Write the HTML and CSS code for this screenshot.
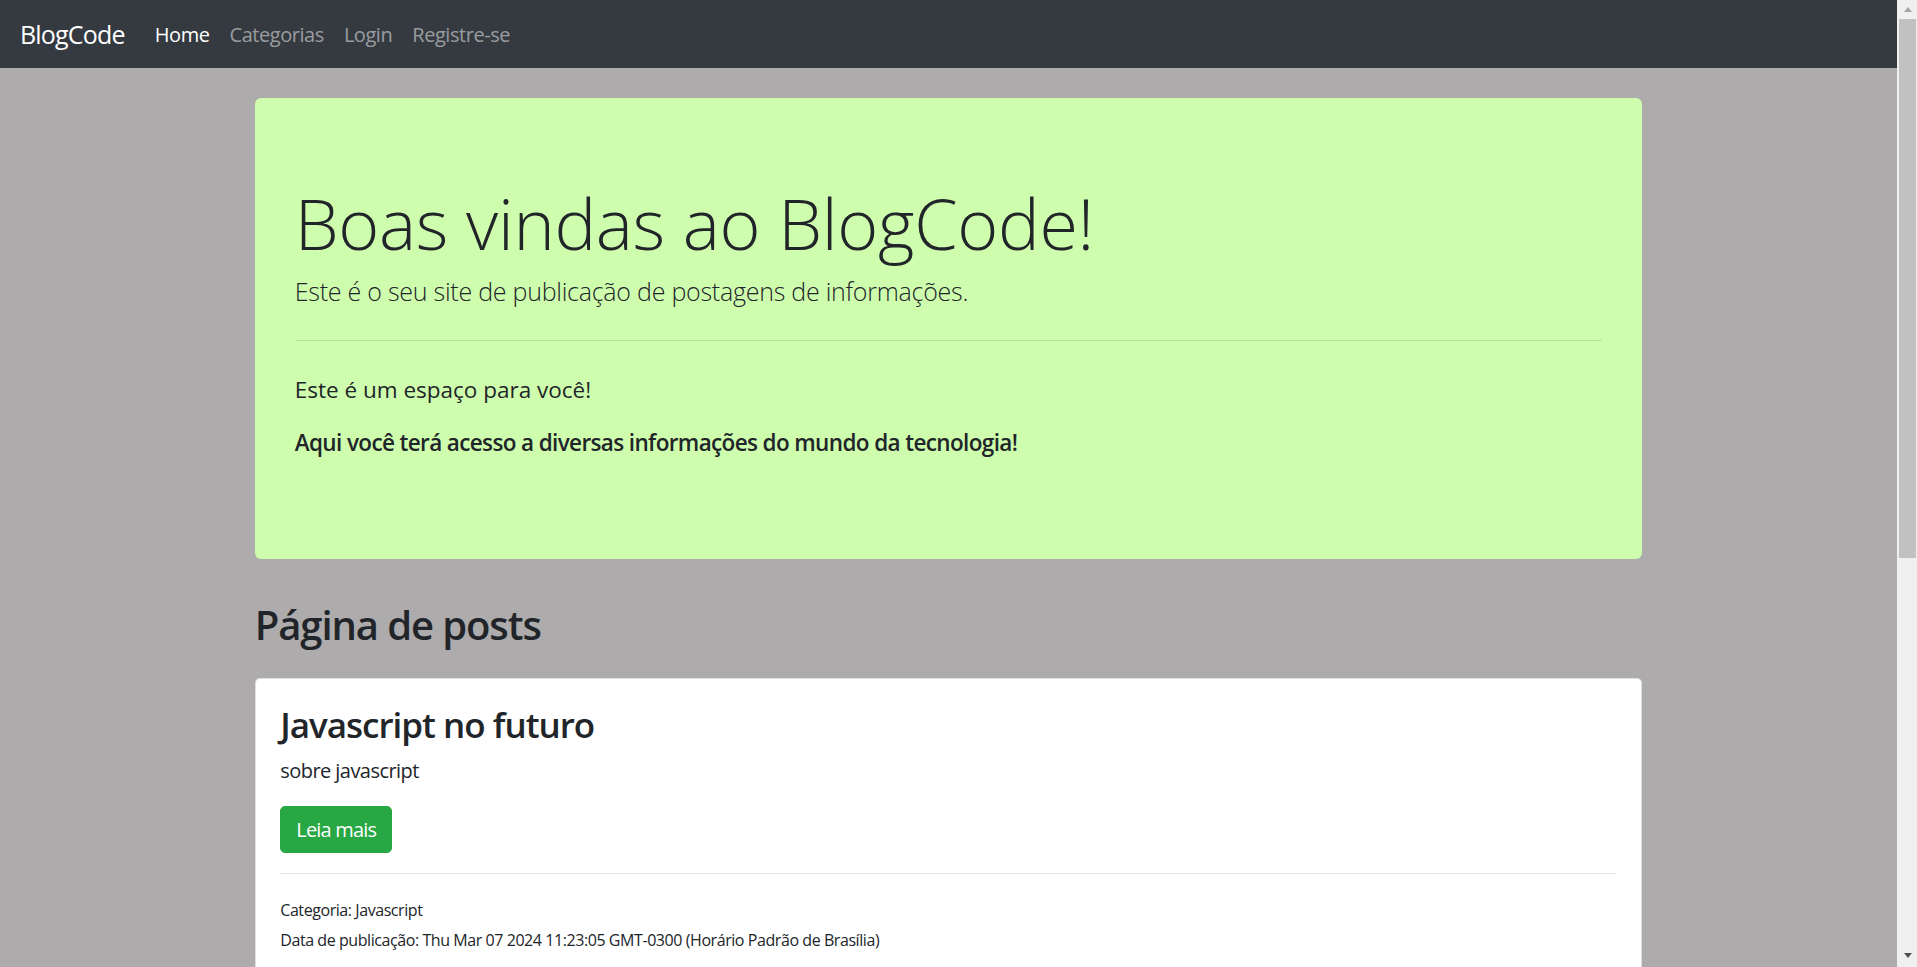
FILE: index.html
```html
<!DOCTYPE html>
<html lang="pt-br">
<head>
<meta charset="utf-8">
<title>BlogCode</title>
<link rel="stylesheet" href="styles.css">
</head>
<body>
<div class="app">
  <div class="page">
    <nav class="navbar">
      <a class="brand" href="#">BlogCode</a>
      <ul class="nav">
        <li><a class="nav-link active" href="#">Home</a></li>
        <li><a class="nav-link" href="#">Categorias</a></li>
        <li><a class="nav-link" href="#">Login</a></li>
        <li><a class="nav-link" href="#">Registre-se</a></li>
      </ul>
    </nav>
    <main class="container">
      <section class="jumbotron">
        <h1 class="display">Boas vindas ao BlogCode!</h1>
        <p class="lead">Este é o seu site de publicação de postagens de informações.</p>
        <hr class="jumbo-rule">
        <p class="jumbo-text">Este é um espaço para você!</p>
        <p class="jumbo-text strong">Aqui você terá acesso a diversas informações do mundo da tecnologia!</p>
      </section>
      <h2 class="section-title">Página de posts</h2>
      <article class="card">
        <div class="card-body">
          <h3 class="card-title">Javascript no futuro</h3>
          <p class="card-text">sobre javascript</p>
          <div class="actions"><a class="btn btn-success" href="#">Leia mais</a></div>
          <hr class="card-rule">
          <p class="meta"><small>Categoria: Javascript</small><br><small>Data de publicação: Thu Mar 07 2024 11:23:05 GMT-0300 (Horário Padrão de Brasília)</small></p>
        </div>
      </article>
    </main>
  </div>
  <div class="scrollbar" aria-hidden="true">
    <div class="sb-btn"><span class="arrow-up"></span></div>
    <div class="sb-thumb"></div>
    <div class="sb-space"></div>
    <div class="sb-btn sb-btn-down"><span class="arrow-down"></span></div>
  </div>
</div>
</body>
</html>
```

FILE: styles.css
```css
* { box-sizing: border-box; }

html, body {
  margin: 0;
  height: 100%;
}

body {
  font-family: "Open Sans", "Noto Sans", "Liberation Sans", sans-serif;
  font-size: 20px;
  line-height: 1.5;
  color: #212529;
  background: #adabac;
  overflow: hidden;
}

.app {
  display: flex;
  height: 100vh;
}

.page {
  flex: 1;
  min-width: 0;
  overflow: hidden;
}

/* Navbar */
.navbar {
  height: 68px;
  background: #343a40;
  display: flex;
  align-items: center;
  padding: 2px 20px 0;
}

.brand {
  font-size: 25px;
  color: #fff;
  text-decoration: none;
  margin-right: 20px;
  letter-spacing: -0.8px;
}

.nav {
  list-style: none;
  display: flex;
  margin: 0;
  padding: 0;
}

.nav-link {
  display: block;
  padding: 0 10px;
  color: rgba(255, 255, 255, 0.5);
  text-decoration: none;
  letter-spacing: -0.45px;
}

.nav-link.active { color: #fff; }

/* Container */
.container {
  width: 1387.5px;
  margin: 30px auto 0;
}

.jumbotron {
  background: #cffdae;
  border-radius: 6px;
  padding: 80px 40px 79px;
  margin-bottom: 42px;
}

.display {
  font-size: 70px;
  font-weight: 300;
  line-height: 1.2;
  margin: 3px 0 8px;
  letter-spacing: -0.3px;
}

.lead {
  font-size: 25px;
  font-weight: 300;
  margin: 0;
  letter-spacing: -0.25px;
}

.jumbo-rule {
  border: 0;
  border-top: 1px solid rgba(0, 0, 0, 0.1);
  margin: 29px 0 32px;
}

.jumbo-text {
  font-size: 22.5px;
  margin: 0 0 20px;
  letter-spacing: 0;
}

.strong {
  font-weight: 600;
  letter-spacing: -0.63px;
}

.section-title {
  font-size: 40px;
  font-weight: 600;
  line-height: 1.2;
  margin: 0 0 29px;
  letter-spacing: -1.1px;
}

/* Card */
.card {
  background: #fff;
  border: 1px solid rgba(0, 0, 0, 0.125);
  border-radius: 5px;
}

.card-body { padding: 25px 25px 25px 24.5px; }

.card-title {
  font-size: 35px;
  font-weight: 600;
  line-height: 1.2;
  margin: 0 0 10px;
  letter-spacing: -1px;
}

.card-text {
  margin: 0 0 20px;
  letter-spacing: -0.55px;
}

.actions { display: flex; }

.btn {
  display: inline-block;
  padding: 7.5px 15px;
  font-size: 20px;
  line-height: 1.5;
  border: 1px solid transparent;
  border-radius: 5px;
  text-decoration: none;
  letter-spacing: -0.8px;
}

.btn-success {
  color: #fff;
  background: #28a745;
  border-color: #28a745;
}

.card-rule {
  border: 0;
  border-top: 1px solid rgba(0, 0, 0, 0.1);
  margin: 20px 0;
}

.meta {
  margin: 0 0 20px;
}

.meta small {
  font-size: 16px;
  letter-spacing: -0.43px;
}

/* Fake window scrollbar */
.scrollbar {
  width: 20px;
  flex: none;
  background: #f0f0f0;
  display: flex;
  flex-direction: column;
}

.sb-btn {
  height: 19px;
  display: flex;
  justify-content: center;
  padding-top: 7px;
  padding-left: 1px;
}

.sb-btn-down { padding-top: 5px; }

.arrow-up {
  width: 0;
  height: 0;
  border-left: 4.5px solid transparent;
  border-right: 4.5px solid transparent;
  border-bottom: 5px solid #a3a3a3;
}

.arrow-down {
  width: 0;
  height: 0;
  border-left: 4.5px solid transparent;
  border-right: 4.5px solid transparent;
  border-top: 5px solid #505050;
}

.sb-thumb {
  height: 539px;
  margin: 0 1px 0 2px;
  background: #c1c1c1;
}

.sb-space { flex: 1; }
```
